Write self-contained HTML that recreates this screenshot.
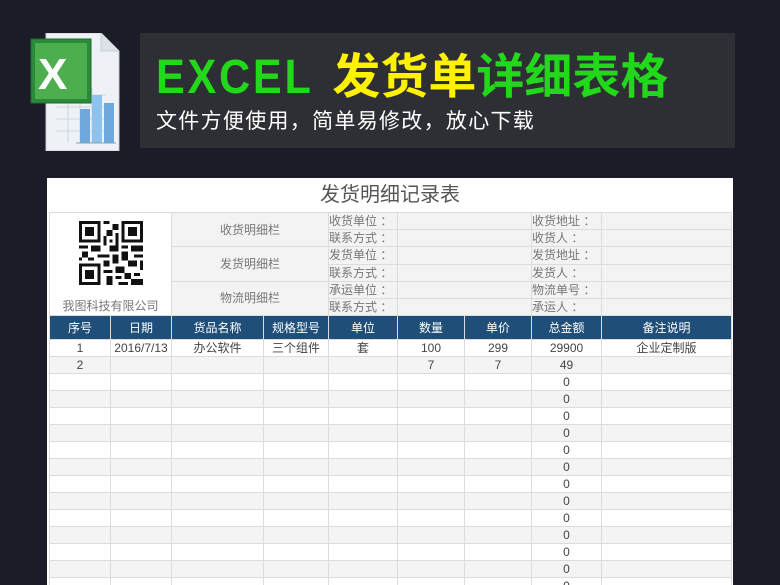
<!DOCTYPE html><html><head><meta charset="utf-8"><style>
body{margin:0;width:780px;height:585px;overflow:hidden;background:#1b1c27;font-family:"Liberation Sans","Noto Sans CJK SC",sans-serif;position:relative}
.ban{position:absolute;left:140px;top:33px;width:595px;height:115px;background:#2e2f35}
.t1{position:absolute;left:156px;top:50px;font-size:48px;font-weight:bold;color:#22d81a;line-height:56px;white-space:nowrap}
.t1 .e{display:inline-block;transform:scaleX(.9);transform-origin:left;letter-spacing:3px;margin-right:-12px}
.t1 .y{color:#fff200}
.t2{position:absolute;left:156px;top:109px;font-size:21px;color:#fff;line-height:26px;white-space:nowrap;letter-spacing:1.3px}
.panel{position:absolute;left:47px;top:178px;width:686px;height:407px;background:#fff;overflow:hidden}
.title{position:absolute;left:0;top:0;width:686px;height:34px;text-align:center;font-size:20px;line-height:34px;color:#555}
table{position:absolute;left:2px;top:34px;border-collapse:collapse;table-layout:fixed;font-size:12px;color:#666}
td{border:1px solid #dcdcdc;height:16px;padding:0;line-height:16px;white-space:nowrap;overflow:hidden}
.info td{background:#f3f3f3;color:#777}
.c{text-align:center}
th{background:#1f4e79;color:#fff;font-weight:normal;height:21px;border:1px solid #dcdcdc;font-size:12px}
.d td{text-align:center;color:#444}
.d tr:nth-child(even) td{background:#f4f4f4}
</style></head><body>
<div class="ban"></div>
<svg style="position:absolute;left:28px;top:33px" width="110" height="118" viewBox="0 0 110 118">
<path d="M18 0h55l18 18v100H18z" fill="#eef1f5" stroke="#c8ccd2"/>
<path d="M73 0v18h18" fill="#dde2e8" stroke="#c8ccd2"/>
<g stroke="#cfd6de" fill="none"><path d="M28 62h50M28 74h50M28 86h50M28 98h50M40 55v55M52 55v55M64 55v55"/></g>
<rect x="52" y="76" width="10" height="34" fill="#6fa8dc"/><rect x="64" y="62" width="10" height="48" fill="#8ec3ee"/><rect x="76" y="70" width="10" height="40" fill="#6fa8dc"/>
<path d="M48 110h40" stroke="#7aa" />
<rect x="3" y="6" width="60" height="64" fill="#2a8a3a" stroke="#1e6b2a"/>
<rect x="7" y="10" width="52" height="56" fill="#4cae4f"/>
<text x="10" y="56" font-size="44" font-weight="bold" fill="#fff" font-family="Liberation Sans">X</text>
</svg>
<div class="t1"><span class="e">EXCEL</span> <span class="y">发货单</span>详细表格</div>
<div class="t2">文件方便使用，简单易修改，放心下载</div>
<div class="panel">
<div class="title">发货明细记录表</div>
<table>
<colgroup><col style="width:61px"><col style="width:61px"><col style="width:92px"><col style="width:65px"><col style="width:69px"><col style="width:67px"><col style="width:67px"><col style="width:70px"><col style="width:130px"></colgroup>
<tbody class="info">
<tr><td colspan="2" rowspan="6" style="background:#fff;text-align:center;vertical-align:bottom;line-height:18px">
<svg width="64" height="72" viewBox="0 0 21 21" style="display:block;margin:4px auto 8px" shape-rendering="crispEdges">
<g fill="#111"><path d="M0 0h7v7H0zM14 0h7v7h-7zM0 14h7v7H0z"/></g>
<g fill="#fff"><path d="M1 1h5v5H1zM15 1h5v5h-5zM1 15h5v5H1z"/></g>
<g fill="#111"><path d="M2 2h3v3H2zM16 2h3v3h-3zM2 16h3v3H2z"/>
<path d="M8 0h2v1H8zM11 1h2v2h-2zM9 3h2v2H9zM8 5h1v3H8zM12 4h1v4h-1zM0 8h3v1H0zM4 8h3v2H4zM10 8h3v2h-3zM14 8h2v1h-2zM17 8h4v2h-4zM1 10h2v2H1zM6 11h4v1H6zM11 11h2v3h-2zM14 10h2v3h-2zM18 11h3v1h-3zM0 12h1v1H0zM3 12h2v1H3zM8 13h2v2H8zM16 13h3v2h-3zM20 13h1v3h-1zM8 16h3v1H8zM12 15h3v2h-3zM9 18h2v3H9zM12 18h2v1h-2zM15 17h2v2h-2zM18 17h2v1h-2zM13 20h3v1h-3zM17 19h4v2h-4zM10 6h1v1h-1z"/></g></svg>我图科技有限公司</td>
<td colspan="2" rowspan="2" class="c">收货明细栏</td><td>收货单位 ：</td><td colspan="2"></td><td>收货地址 ：</td><td></td></tr>
<tr><td>联系方式 ：</td><td colspan="2"></td><td>收货人 ：</td><td></td></tr>
<tr><td colspan="2" rowspan="2" class="c">发货明细栏</td><td>发货单位 ：</td><td colspan="2"></td><td>发货地址 ：</td><td></td></tr>
<tr><td>联系方式 ：</td><td colspan="2"></td><td>发货人 ：</td><td></td></tr>
<tr><td colspan="2" rowspan="2" class="c">物流明细栏</td><td>承运单位 ：</td><td colspan="2"></td><td>物流单号 ：</td><td></td></tr>
<tr><td>联系方式 ：</td><td colspan="2"></td><td>承运人 ：</td><td></td></tr>
</tbody>
<tbody><tr><th>序号</th><th>日期</th><th>货品名称</th><th>规格型号</th><th>单位</th><th>数量</th><th>单价</th><th>总金额</th><th>备注说明</th></tr></tbody>
<tbody class="d">
<tr><td>1</td><td>2016/7/13</td><td>办公软件</td><td>三个组件</td><td>套</td><td>100</td><td>299</td><td>29900</td><td>企业定制版</td></tr>
<tr><td>2</td><td></td><td></td><td></td><td></td><td>7</td><td>7</td><td>49</td><td></td></tr>
<tr><td></td><td></td><td></td><td></td><td></td><td></td><td></td><td>0</td><td></td></tr>
<tr><td></td><td></td><td></td><td></td><td></td><td></td><td></td><td>0</td><td></td></tr>
<tr><td></td><td></td><td></td><td></td><td></td><td></td><td></td><td>0</td><td></td></tr>
<tr><td></td><td></td><td></td><td></td><td></td><td></td><td></td><td>0</td><td></td></tr>
<tr><td></td><td></td><td></td><td></td><td></td><td></td><td></td><td>0</td><td></td></tr>
<tr><td></td><td></td><td></td><td></td><td></td><td></td><td></td><td>0</td><td></td></tr>
<tr><td></td><td></td><td></td><td></td><td></td><td></td><td></td><td>0</td><td></td></tr>
<tr><td></td><td></td><td></td><td></td><td></td><td></td><td></td><td>0</td><td></td></tr>
<tr><td></td><td></td><td></td><td></td><td></td><td></td><td></td><td>0</td><td></td></tr>
<tr><td></td><td></td><td></td><td></td><td></td><td></td><td></td><td>0</td><td></td></tr>
<tr><td></td><td></td><td></td><td></td><td></td><td></td><td></td><td>0</td><td></td></tr>
<tr><td></td><td></td><td></td><td></td><td></td><td></td><td></td><td>0</td><td></td></tr>
<tr><td></td><td></td><td></td><td></td><td></td><td></td><td></td><td>0</td><td></td></tr>
</tbody></table>
</div>
</body></html>
